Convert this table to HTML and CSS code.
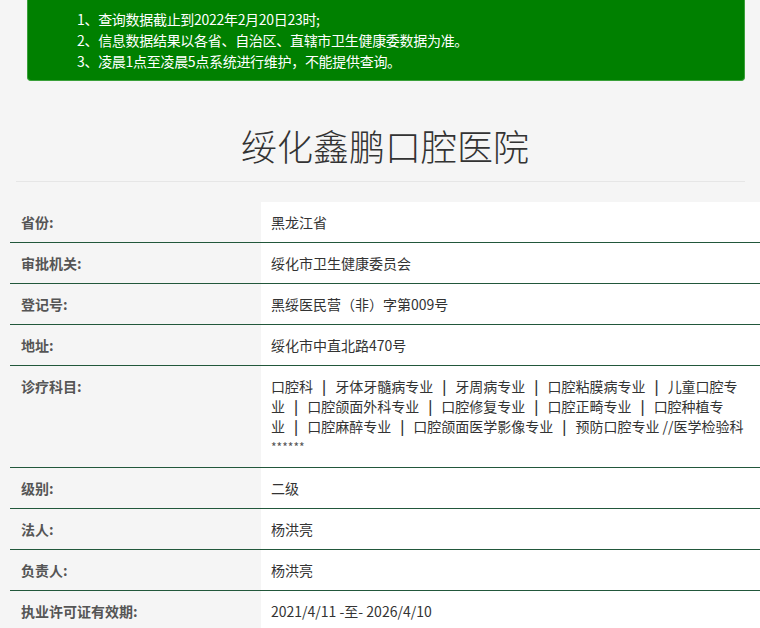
FILE: index.html
```html
<!DOCTYPE html>
<html lang="zh-CN">
<head>
<meta charset="utf-8">
<title>绥化鑫鹏口腔医院</title>
<link rel="stylesheet" href="styles.css">
</head>
<body>
<div class="notice">
  <p>1、查询数据截止到2022年2月20日23时;</p>
  <p>2、信息数据结果以各省、自治区、直辖市卫生健康委数据为准。</p>
  <p>3、凌晨1点至凌晨5点系统进行维护，不能提供查询。</p>
</div>
<h1 class="title">绥化鑫鹏口腔医院</h1>
<div class="divider"></div>
<table class="info">
  <tr><th>省份:</th><td>黑龙江省</td></tr>
  <tr><th>审批机关:</th><td>绥化市卫生健康委员会</td></tr>
  <tr><th>登记号:</th><td>黑绥医民营（非）字第009号</td></tr>
  <tr><th>地址:</th><td>绥化市中直北路470号</td></tr>
  <tr><th>诊疗科目:</th><td>口腔科<span class="sep">|</span>牙体牙髓病专业<span class="sep">|</span>牙周病专业<span class="sep">|</span>口腔粘膜病专业<span class="sep">|</span>儿童口腔专业<span class="sep">|</span>口腔颌面外科专业<span class="sep">|</span>口腔修复专业<span class="sep">|</span>口腔正畸专业<span class="sep">|</span>口腔种植专业<span class="sep">|</span>口腔麻醉专业<span class="sep">|</span>口腔颌面医学影像专业<span class="sep">|</span>预防口腔专业 //医学检验科<br><span class="stars">******</span></td></tr>
  <tr><th>级别:</th><td>二级</td></tr>
  <tr><th>法人:</th><td>杨洪亮</td></tr>
  <tr><th>负责人:</th><td>杨洪亮</td></tr>
  <tr><th>执业许可证有效期:</th><td>2021/4/11 -至- 2026/4/10</td></tr>
</table>
</body>
</html>
```
FILE: styles.css
```css
html, body {
  margin: 0;
  padding: 0;
  background: #f5f5f5;
  font-family: "Microsoft YaHei", "Noto Sans CJK SC", "Noto Sans", sans-serif;
  color: #333;
  overflow: hidden;
}
.notice {
  margin: 0 15px 0 27px;
  height: 81px;
  box-sizing: border-box;
  background: #008000;
  border: 1px solid #3aa03a;
  border-top: none;
  border-radius: 0 0 4px 4px;
  padding: 9px 0 0 49px;
  color: #fff;
  font-size: 14px;
  line-height: 21px;
}
.notice p {
  margin: 0;
  letter-spacing: -0.3px;
}
.title {
  margin: 39px 0 0 0;
  text-align: center;
  font-size: 36px;
  font-weight: 300;
  line-height: 50px;
  height: 50px;
  color: #333;
  padding-left: 10px;
}
.divider {
  margin: 11px 15px 0 16px;
  height: 1px;
  background: #e6e6e6;
}
.info {
  margin: 20px 0 0 10px;
  width: 750px;
  border-collapse: collapse;
  font-size: 14px;
  line-height: 20px;
}
.info th, .info td {
  border-bottom: 1px solid #22573b;
  padding: 10px 15px 10px 11px;
  vertical-align: top;
  text-align: left;
}
.info th {
  width: 225px;
  background: #f5f5f5;
  font-weight: bold;
  color: #555;
}
.info td {
  background: #fff;
  padding-left: 10px;
  color: #333;
}
.sep {
  margin: 0 9px;
  font-weight: bold;
  color: #333;
}
.stars {
  font-size: 12px;
  color: #555;
}
```
